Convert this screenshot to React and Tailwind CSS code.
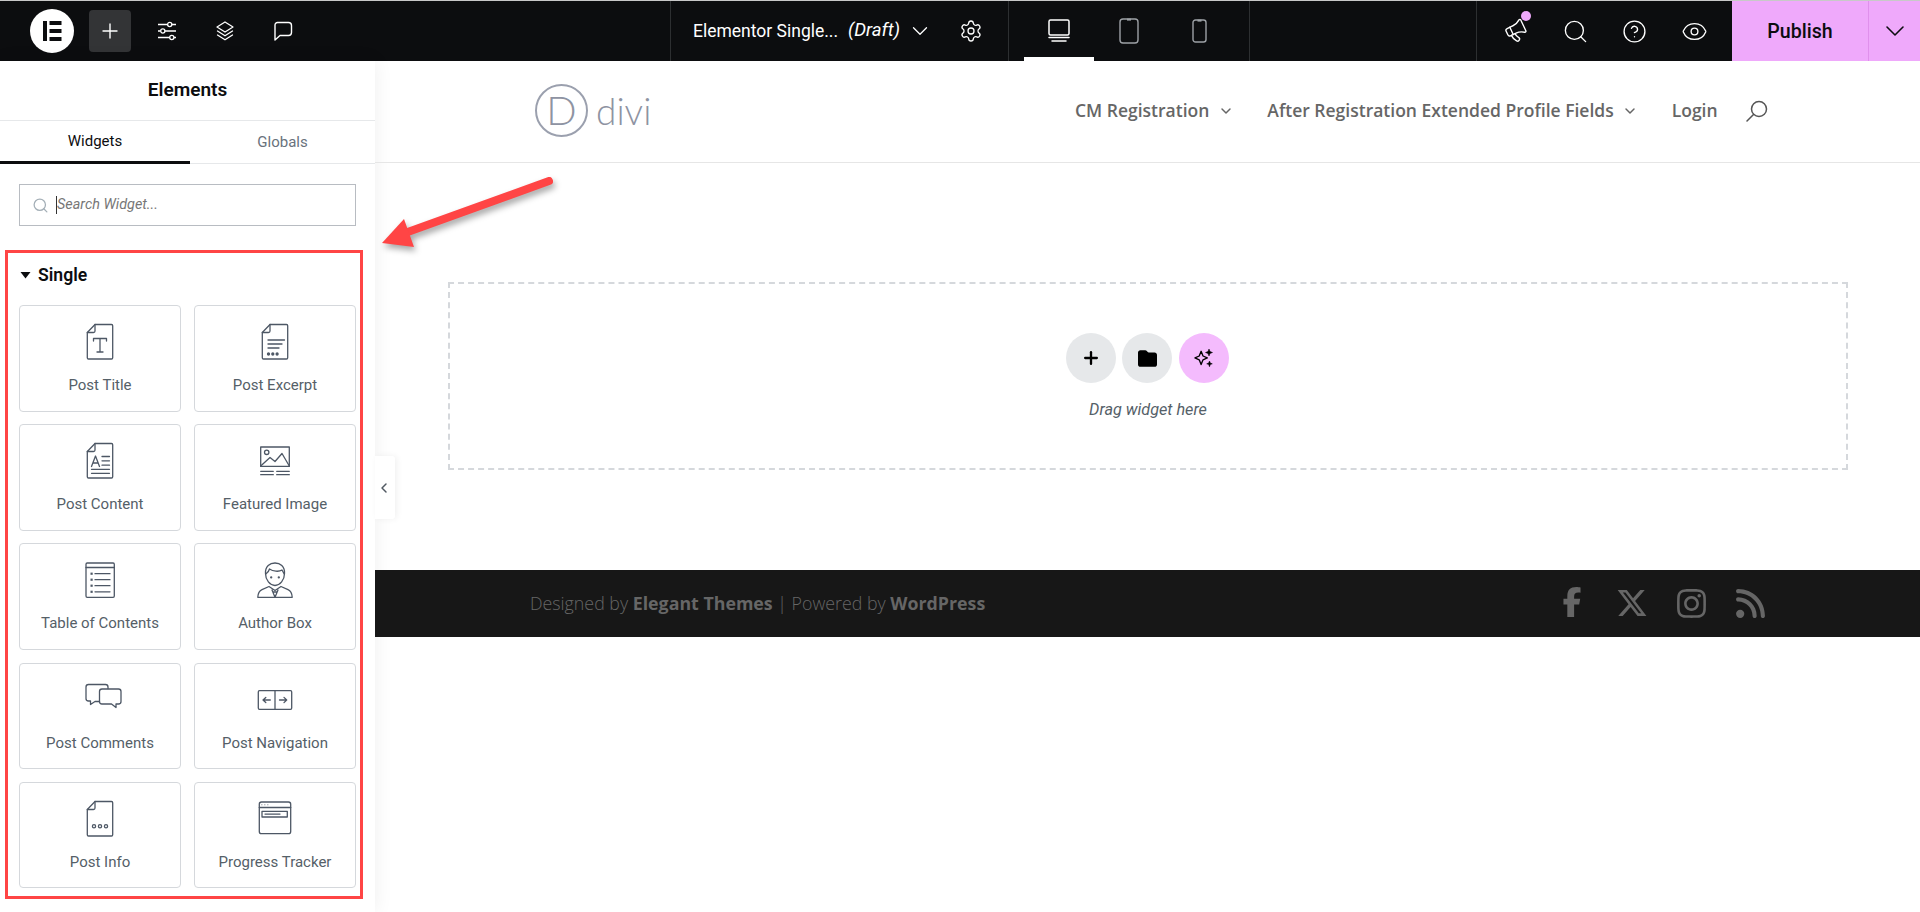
import React from "react";
import { Plus, Settings, Search, CircleHelp, Eye, ChevronDown, ChevronLeft, Megaphone } from "lucide-react";
import { FaFacebookF, FaXTwitter, FaInstagram, FaRss, FaFolder } from "react-icons/fa6";

const Doc = ({ children }) => (
  <>
    <path d="M17 5.5H33.5a1.2 1.2 0 0 1 1.2 1.2V38.8a1.2 1.2 0 0 1-1.2 1.2H10.5a1.2 1.2 0 0 1-1.2-1.2V13.5Z" />
    <path d="M17 5.5V12a1.5 1.5 0 0 1-1.5 1.5H9.3" />
    {children}
  </>
);

const icons = {
  title: (
    <Doc>
      <path d="M15.5 22V19.5H28.5V22M22 19.5V33M19 33H25" />
    </Doc>
  ),
  excerpt: (
    <Doc>
      <path d="M15 21H31.5M15 25H29M15 29H26" />
      <circle cx="15.5" cy="35" r="1" fill="#4d5765" />
      <circle cx="19.8" cy="35" r="1" fill="#4d5765" />
      <circle cx="24.1" cy="35" r="1" fill="#4d5765" />
    </Doc>
  ),
  content: (
    <Doc>
      <path d="M13.5 28.5L17.5 18L21.5 28.5M15 25H20M24 18.5H31.5M24 22.8H31.5M24 27.2H31.5M13.5 31.3H31.5M13.5 35.3H31.5" />
    </Doc>
  ),
  image: (
    <>
      <rect x="7.7" y="9" width="28.6" height="19.4" />
      <circle cx="13.7" cy="14.3" r="2.2" />
      <path d="M7.7 28L17 19.5L22 23.5L29 15.5L36.3 28" />
      <path d="M7.7 33.3H20.3M23.7 33.3H36.3M7.7 36.7H20.3M23.7 36.7H36.3" />
    </>
  ),
  toc: (
    <>
      <rect x="8" y="6" width="28.3" height="34.3" rx="1.2" />
      <path d="M8 10.5H36.3M17 16.7H32M17 22.7H32M17 28.7H32M17 34.8H32" />
      <g fill="#4d5765" stroke="none">
        <rect x="12.5" y="15.6" width="2.2" height="2.2" />
        <rect x="12.5" y="21.6" width="2.2" height="2.2" />
        <rect x="12.5" y="27.6" width="2.2" height="2.2" />
        <rect x="12.5" y="33.7" width="2.2" height="2.2" />
      </g>
    </>
  ),
  author: (
    <>
      <path d="M12.5 16.5C12 9 17 6 22 6S32 9 31.5 16.5C31.5 23 27 28.5 22 28.5S12.5 23 12.5 16.5Z" />
      <path d="M12.8 17C15 15.5 16 14 16.5 12C20 14.5 26 15 29 13C30 14.5 30.5 16 31.2 17" />
      <path d="M4.8 40.3C5 36 6.5 33.8 9 32.7L16 29.5L22 33.5L28 29.5L35 32.7C37.5 33.8 39 36 39.2 40.3ZM19 33L22 40.3L25 33M20.5 35H23.5" />
      <circle cx="18.2" cy="20.4" r="0.5" fill="#4d5765" />
      <circle cx="25.8" cy="20.4" r="0.5" fill="#4d5765" />
    </>
  ),
  comments: (
    <>
      <path d="M30 11.5V10A2.5 2.5 0 0 0 27.5 7.5H10.5A2.5 2.5 0 0 0 8 10V21.5A2.5 2.5 0 0 0 10.5 24H12.5V27.5L17 24.5H21.5" />
      <path d="M24 12H40.5A2.5 2.5 0 0 1 43 14.5V24.5A2.5 2.5 0 0 1 40.5 27H38V30.5L33.5 27H24A2.5 2.5 0 0 1 21.5 24.5V14.5A2.5 2.5 0 0 1 24 12Z" />
    </>
  ),
  nav: (
    <>
      <rect x="5.3" y="13.7" width="33.4" height="18.6" rx="1.2" />
      <path d="M22 13.7V32.3M10 23H17.3M12.8 20.4L10 23L12.8 25.6M26.5 23H33.7M31 20.4L33.7 23L31 25.6" />
    </>
  ),
  info: (
    <Doc>
      <circle cx="16" cy="30.3" r="1.6" />
      <circle cx="22" cy="30.3" r="1.6" />
      <circle cx="28" cy="30.3" r="1.6" />
    </Doc>
  ),
  tracker: (
    <>
      <rect x="6.3" y="6" width="31.4" height="31.7" rx="2.2" />
      <path d="M6.3 11.5H37.7" />
      <rect x="9" y="15.3" width="25.3" height="5.7" />
      <path d="M12 18.1H27" />
      <g fill="#4d5765" stroke="none">
        <circle cx="8.9" cy="8.8" r="0.5" />
        <circle cx="11.9" cy="8.8" r="0.5" />
        <circle cx="14.9" cy="8.8" r="0.5" />
      </g>
    </>
  ),
};

const widgets = [
  ["Post Title", "title"],
  ["Post Excerpt", "excerpt"],
  ["Post Content", "content"],
  ["Featured Image", "image"],
  ["Table of Contents", "toc"],
  ["Author Box", "author"],
  ["Post Comments", "comments"],
  ["Post Navigation", "nav"],
  ["Post Info", "info"],
  ["Progress Tracker", "tracker"],
];

function Card({ label, icon }) {
  return (
    <div className="h-[106.5px] rounded-[4px] border border-[#d5d8dc] bg-white flex flex-col items-center pt-[13px]">
      <svg width="44" height="44" viewBox="0 0 44 44" fill="none" stroke="#4d5765" strokeWidth="1.3" strokeLinejoin="round" strokeLinecap="round">
        {icons[icon]}
      </svg>
      <div className="mt-[12px] h-[20px] leading-[20px] text-[15px] whitespace-nowrap text-[#556068]">{label}</div>
    </div>
  );
}

const Divider = () => <div className="w-px h-[60px] bg-[#2d2f31] shrink-0" />;

function IconBox({ children, w = "w-[58px]" }) {
  return <div className={`${w} h-[60px] flex items-center justify-center text-white`}>{children}</div>;
}

export default function App() {
  return (
    <div className="relative w-[1920px] h-[912px] overflow-hidden bg-white font-[family-name:Roboto,sans-serif]">
      {/* top bar */}
      <div className="h-[61px] border-t border-[#c8c8c8] bg-[#0c0d0f] flex items-stretch">
        <div className="w-[670px] shrink-0 flex items-center pl-[30px]">
          <div className="w-[44px] h-[44px] rounded-full bg-white flex items-center justify-center">
            <svg width="20" height="20" viewBox="0 0 20 20" fill="#0c0d0f">
              <rect x="1" y="0" width="4" height="20" />
              <rect x="7.5" y="0" width="12" height="4" />
              <rect x="7.5" y="8" width="12" height="4" />
              <rect x="7.5" y="16" width="12" height="4" />
            </svg>
          </div>
          <div className="ml-[15px] w-[42px] h-[42px] rounded-[4px] bg-[#333436] flex items-center justify-center text-white">
            <Plus size={24} strokeWidth={1.4} />
          </div>
          <div className="ml-[7px] flex">
            <IconBox>
              <svg width="20" height="20" viewBox="0 0 20 20" fill="none" stroke="white" strokeWidth="1.3">
                <path d="M1 3.5H10.5M15 3.5H19M1 10H3.5M8 10H19M1 16.5H12.5M17 16.5H19" />
                <circle cx="12.7" cy="3.5" r="2.1" />
                <circle cx="5.8" cy="10" r="2.1" />
                <circle cx="14.8" cy="16.5" r="2.1" />
              </svg>
            </IconBox>
            <IconBox>
              <svg width="20" height="20" viewBox="0 0 20 20" fill="none" stroke="white" strokeWidth="1.3" strokeLinejoin="round" strokeLinecap="round">
                <path d="M10 1L18 6L10 11L2 6Z" />
                <path d="M2.5 10L10 14.8L17.5 10M2.5 14L10 18.8L17.5 14" />
              </svg>
            </IconBox>
            <IconBox>
              <svg width="20" height="20" viewBox="0 0 20 20" fill="none" stroke="white" strokeWidth="1.4" strokeLinejoin="round">
                <path d="M4.5 1.5H15.5A3 3 0 0 1 18.5 4.5V11.5A3 3 0 0 1 15.5 14.5H7L2 19V4A2.5 2.5 0 0 1 4.5 1.5Z" />
              </svg>
            </IconBox>
          </div>
        </div>
        <Divider />
        <div className="w-[337px] shrink-0 flex items-center pl-[22px] text-white">
          <span className="text-[17.5px] whitespace-nowrap w-[145px]">Elementor Single...</span>
          <span className="ml-[10px] text-[18.6px] italic whitespace-nowrap w-[52px]">(Draft)</span>
          <ChevronDown size={26} strokeWidth={1.2} className="ml-[7px]" />
          <Settings size={24} strokeWidth={1.3} className="ml-[26px]" />
        </div>
        <Divider />
        <div className="w-[240px] shrink-0 flex pl-[15px]">
          <div className="w-[70px] h-[60px] flex items-center justify-center border-b-[4px] border-white">
            <svg width="24" height="24" viewBox="0 0 24 24" fill="none" stroke="white" strokeWidth="1.5" className="mt-[3px]">
              <rect x="2" y="1" width="20" height="15" rx="1.5" />
              <path d="M2 18.6H22M5 22H19" strokeLinecap="round" />
            </svg>
          </div>
          <div className="w-[70px] h-[60px] flex items-center justify-center">
            <svg width="20" height="26" viewBox="0 0 20 26" fill="none" stroke="#9da1a6" strokeWidth="1.4">
              <rect x="1" y="1" width="18" height="24" rx="3" />
              <path d="M8 1.6H12" strokeWidth="2" />
            </svg>
          </div>
          <div className="w-[70px] h-[60px] flex items-center justify-center">
            <svg width="15" height="24" viewBox="0 0 15 24" fill="none" stroke="#9da1a6" strokeWidth="1.4">
              <rect x="1" y="1" width="13" height="22" rx="2.5" />
              <path d="M5.5 1.6H9.5" strokeWidth="2" />
            </svg>
          </div>
        </div>
        <Divider />
        <div className="w-[226px] shrink-0" />
        <Divider />
        <div className="w-[255px] shrink-0 flex pl-[9px]">
          <IconBox w="w-[60px]">
            <div className="relative">
              <Megaphone size={24} strokeWidth={1.4} className="-rotate-[25deg]" />
              <span className="absolute -top-[8px] left-[17px] w-[10px] h-[10px] rounded-full bg-[#efa9fb]" />
            </div>
          </IconBox>
          <IconBox>
            <Search size={27} strokeWidth={1.2} />
          </IconBox>
          <IconBox w="w-[60px]">
            <CircleHelp size={25} strokeWidth={1.3} />
          </IconBox>
          <IconBox w="w-[60px]">
            <Eye size={27} strokeWidth={1.2} />
          </IconBox>
        </div>
        <div className="w-[136px] shrink-0 bg-[#efa9fb] flex items-center justify-center pt-[1px] text-[19.6px] font-medium text-[#0c0d0f]">Publish</div>
        <div className="flex-1 bg-[#efa9fb] border-l border-[#e090ec] flex items-center justify-center text-[#0c0d0f]">
          <ChevronDown size={32} strokeWidth={1.2} />
        </div>
      </div>

      <div className="flex h-[851px]">
        {/* sidebar */}
        <aside className="w-[375px] shrink-0 bg-white shadow-[0_0_18px_rgba(0,0,0,0.07)]">
          <div className="h-[60px] border-b border-[#e6e8ea] flex items-center justify-center text-[19px] font-semibold text-[#0c0d0f] pb-[1px]">Elements</div>
          <div className="h-[43px] border-b border-[#e6e8ea] flex text-[15px]">
            <div className="w-[190px] h-[43px] border-b-[3px] border-[#0c0d0f] flex items-center justify-center text-[#0c0d0f]">Widgets</div>
            <div className="w-[185px] h-[43px] flex items-center justify-center text-[#69727d]">Globals</div>
          </div>
          <div className="mt-[20px] ml-[19px] w-[337px] h-[42px] border border-[#b8bcc2] flex items-center pl-[12px]">
            <Search size={17} strokeWidth={1.8} className="text-[#a4afb7]" />
            <span className="ml-[7px] w-px h-[18px] bg-[#333]" />
            <span className="text-[14.4px] italic text-[#777] -mt-[1px]">Search Widget...</span>
          </div>
          <section className="mt-[24px] ml-[5px] w-[358px] h-[649px] border-[3px] border-[#ff4545] pl-[11px]">
            <div className="h-[44px] flex items-center mb-[8px]">
              <svg width="11" height="7" viewBox="0 0 11 7" className="ml-[1px]">
                <path d="M0.5 0H10.5L5.5 6.5Z" fill="#0c0d0f" />
              </svg>
              <span className="ml-[7px] text-[17.6px] font-semibold text-[#0c0d0f]">Single</span>
            </div>
            <div className="w-[337px] grid grid-cols-[162px_162px] gap-x-[13px] gap-y-[12.7px]">
              {widgets.map(([label, icon]) => (
                <Card key={label} label={label} icon={icon} />
              ))}
            </div>
          </section>
        </aside>

        {/* canvas */}
        <main className="relative flex-1 min-w-0">
          <div className="absolute left-0 top-[395px] w-[20px] h-[63px] bg-white rounded-r-[3px] shadow-[2px_0_6px_rgba(0,0,0,0.06)] flex items-center justify-center text-[#515962]">
            <ChevronLeft size={16} strokeWidth={2.2} className="-ml-[2px]" />
          </div>
          <header className="h-[102px] border-b border-[#e6e6e6] flex items-center pb-[3px] pl-[160px] font-[family-name:'Open_Sans',sans-serif]">
            <div className="flex items-center w-[540px] shrink-0">
              <div className="w-[53px] h-[53px] rounded-full border-2 border-[#9ba0ae] flex items-center justify-center text-[40px] font-light text-[#8e93a2] leading-none font-[family-name:Lato,sans-serif]">D</div>
              <span className="ml-[8px] text-[37px] font-light text-[#8e93a2] leading-none font-[family-name:Lato,sans-serif]">divi</span>
            </div>
            <nav className="flex items-center text-[17.5px] font-semibold text-[#666] whitespace-nowrap">
              <span>CM Registration</span>
              <ChevronDown size={16} strokeWidth={2.2} className="ml-[9px] mt-[2px]" />
              <span className="ml-[33px]">After Registration Extended Profile Fields</span>
              <ChevronDown size={16} strokeWidth={2.2} className="ml-[8px] mt-[2px]" />
              <span className="ml-[34px]">Login</span>
              <svg width="22" height="22" viewBox="0 0 22 22" fill="none" stroke="#555" strokeWidth="1.5" className="ml-[28px] mt-[2px]">
                <circle cx="13" cy="9" r="7.5" />
                <path d="M7.5 14.5L1 21" strokeLinecap="round" />
              </svg>
            </nav>
          </header>
          <div className="mt-[119px] ml-[73px] w-[1400px] h-[188px] border-2 border-dashed border-[#d5d8dc] flex flex-col items-center pt-[49px]">
            <div className="flex gap-[6.5px] -ml-[2px]">
              <div className="w-[50px] h-[50px] rounded-full bg-[#e6e8ea] flex items-center justify-center text-black">
                <Plus size={20} strokeWidth={2.8} />
              </div>
              <div className="w-[50px] h-[50px] rounded-full bg-[#e6e8ea] flex items-center justify-center text-black">
                <FaFolder size={19} />
              </div>
              <div className="w-[50px] h-[50px] rounded-full bg-[#f4bbfd] flex items-center justify-center">
                <svg width="20" height="20" viewBox="0 0 20 20" fill="none" stroke="black" strokeWidth="1.4" strokeLinejoin="round">
                  <path d="M7.5 5L9.5 10L14 12L9.5 14L7.5 19L5.5 14L1 12L5.5 10Z" transform="translate(0 -1.5) scale(0.95)" />
                  <path d="M15 1L16 3.5L18.5 4.5L16 5.5L15 8L14 5.5L11.5 4.5L14 3.5Z" fill="black" strokeWidth="0.5" />
                  <path d="M15.5 13L16.3 15L18.3 15.8L16.3 16.6L15.5 18.8L14.7 16.6L12.7 15.8L14.7 15Z" fill="black" strokeWidth="0.5" />
                </svg>
              </div>
            </div>
            <div className="mt-[15px] text-[16.2px] italic text-[#556068] leading-[24px]">Drag widget here</div>
          </div>
          <footer className="mt-[100px] h-[67px] bg-[#171717] flex items-center justify-between pl-[155px] pr-[139.75px] font-[family-name:'Open_Sans',sans-serif] text-[#666]">
            <div className="text-[17.8px] font-light whitespace-nowrap">
              Designed by <b className="font-bold">Elegant Themes</b> | Powered by <b className="font-bold">WordPress</b>
            </div>
            <div className="flex">
              <div className="w-[59.5px] flex justify-center"><FaFacebookF size={30} /></div>
              <div className="w-[59.5px] flex justify-center"><FaXTwitter size={32} /></div>
              <div className="w-[59.5px] flex justify-center"><FaInstagram size={33} /></div>
              <div className="w-[59.5px] flex justify-center"><FaRss size={33} /></div>
            </div>
          </footer>
        </main>
      </div>

      {/* annotation arrow */}
      <svg className="absolute left-[370px] top-[170px] drop-shadow-[2px_4px_3px_rgba(0,0,0,0.35)]" width="200" height="90" viewBox="370 170 200 90">
        <path d="M549 181L405 233" stroke="#ff4545" strokeWidth="8" strokeLinecap="round" />
        <path d="M382 243L404 219L414 247Z" fill="#ff4545" />
      </svg>
    </div>
  );
}
